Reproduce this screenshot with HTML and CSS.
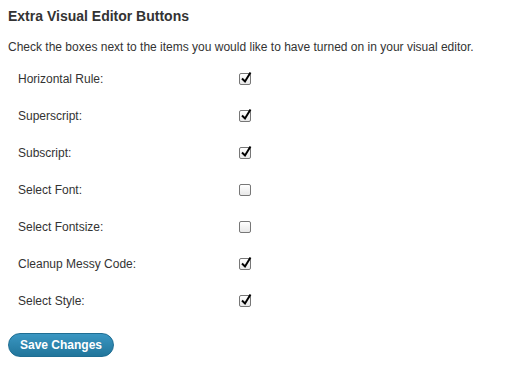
FILE: index.html
```html
<!DOCTYPE html>
<html>
    <head>
        <title>Extra Visual Editor Buttons</title>
        <link rel="stylesheet" href="styles.css">
    </head>
    <body>
        <h3>Extra Visual Editor Buttons</h3>
        <p class="intro">Check the boxes next to the items you would like to have turned on in your visual editor.</p>
        <div class="options">
            <div class="row"><span class="label">Horizontal Rule:</span><span class="box on"><svg viewBox="0 0 14 14"><path d="M3 7.5 L6 10.5 L11.5 1.5"/></svg></span></div>
            <div class="row"><span class="label">Superscript:</span><span class="box on"><svg viewBox="0 0 14 14"><path d="M3 7.5 L6 10.5 L11.5 1.5"/></svg></span></div>
            <div class="row"><span class="label">Subscript:</span><span class="box on"><svg viewBox="0 0 14 14"><path d="M3 7.5 L6 10.5 L11.5 1.5"/></svg></span></div>
            <div class="row"><span class="label">Select Font:</span><span class="box"></span></div>
            <div class="row"><span class="label">Select Fontsize:</span><span class="box"></span></div>
            <div class="row"><span class="label">Cleanup Messy Code:</span><span class="box on"><svg viewBox="0 0 14 14"><path d="M3 7.5 L6 10.5 L11.5 1.5"/></svg></span></div>
            <div class="row"><span class="label">Select Style:</span><span class="box on"><svg viewBox="0 0 14 14"><path d="M3 7.5 L6 10.5 L11.5 1.5"/></svg></span></div>
        </div>
        <button class="save">Save Changes</button>
    </body>
</html>
```
FILE: styles.css
```css
body {
    margin: 0;
    padding: 0 8px;
    font-family: "Liberation Sans", Arial, sans-serif;
    font-size: 12px;
    color: #333;
    background: #fff;
}
h3 {
    font-size: 14px;
    font-weight: bold;
    margin: 8px 0 0;
    line-height: 17px;
}
.intro {
    margin: 14px 0 0;
    line-height: 16px;
}
.options {
    margin-top: 5px;
}
.row {
    display: flex;
    align-items: center;
    height: 37px;
}
.label {
    width: 221px;
    padding-left: 10px;
}
.box {
    position: relative;
    width: 10px;
    height: 10px;
    border: 1px solid #777;
    border-radius: 2px;
    background: linear-gradient(#fff, #e8e8e8);
}
.box svg {
    position: absolute;
    left: -1px;
    top: -3px;
    width: 14px;
    height: 14px;
    overflow: visible;
}
.box svg path {
    fill: none;
    stroke: #000;
    stroke-width: 2;
}
.save {
    margin-top: 14px;
    height: 24px;
    padding: 0 11px;
    border: 1px solid #1f6e93;
    border-radius: 12px;
    background: linear-gradient(#3a96c2, #21759b);
    color: #fff;
    font-family: "Liberation Sans", Arial, sans-serif;
    font-size: 12px;
    font-weight: bold;
}
```
